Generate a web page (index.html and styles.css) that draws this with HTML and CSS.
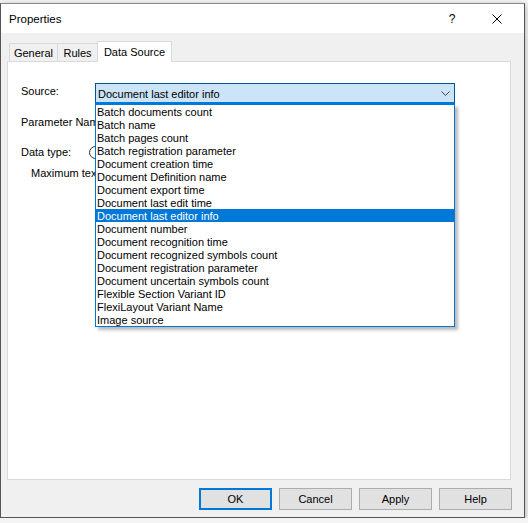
FILE: index.html
```html
<!DOCTYPE html>
<html lang="en">
<head>
  <meta charset="UTF-8">
  <title>Properties</title>
  <link rel="stylesheet" href="styles.css">
</head>
<body>

<div class="window">
  <div class="titlebar">
    <span class="title">Properties</span>
    <span class="cap-btn help">?</span>
    <span class="cap-btn close">
      <svg width="10" height="10" viewBox="0 0 10 10"><path d="M0.5 0.5L9.5 9.5M9.5 0.5L0.5 9.5" stroke="#000" stroke-width="1"/></svg>
    </span>
  </div>

  <div class="client">
    <div class="tabs">
      <div class="tab tab-general">General</div>
      <div class="tab tab-rules">Rules</div>
      <div class="tab tab-source active">Data Source</div>
    </div>

    <div class="panel">
      <div class="row row-source">
        <label class="lbl">Source:</label>
        <div class="combo">
          <div class="combo-box">
            <span>Document last editor info</span>
            <svg class="chev" width="9" height="5" viewBox="0 0 9 5"><path d="M0.5 0.5L4.5 4.5L8.5 0.5" fill="none" stroke="#444" stroke-width="1"/></svg>
          </div>
          <ul class="dropdown">
            <li>Batch documents count</li>
            <li>Batch name</li>
            <li>Batch pages count</li>
            <li>Batch registration parameter</li>
            <li>Document creation time</li>
            <li>Document Definition name</li>
            <li>Document export time</li>
            <li>Document last edit time</li>
            <li class="selected">Document last editor info</li>
            <li>Document number</li>
            <li>Document recognition time</li>
            <li>Document recognized symbols count</li>
            <li>Document registration parameter</li>
            <li>Document uncertain symbols count</li>
            <li>Flexible Section Variant ID</li>
            <li>FlexiLayout Variant Name</li>
            <li>Image source</li>
          </ul>
        </div>
      </div>

      <div class="row row-param">
        <label class="lbl">Parameter Name:</label>
      </div>

      <div class="row row-type">
        <label class="lbl lbl-type">Data type:</label>
        <span class="radio"></span>
      </div>

      <div class="row row-max">
        <label class="lbl lbl-max">Maximum text length:</label>
      </div>
    </div>

    <div class="buttons">
      <button class="btn default">OK</button>
      <button class="btn">Cancel</button>
      <button class="btn">Apply</button>
      <button class="btn">Help</button>
    </div>
  </div>
</div>

</body>
</html>
```

FILE: styles.css
```css
* {
  box-sizing: border-box;
}
body {
  margin: 0;
  padding-top: 3px;
  background: #f4f4f4;
  font-family: "Liberation Sans", Arial, sans-serif;
  font-size: 11px;
  color: #000;
}
.window {
  width: 525px;
  height: 515px;
  border: 1px solid #555;
  border-top-color: #8a8a8a;
  background: #f0f0f0;
  box-shadow: 0 2px 6px rgba(0, 0, 0, 0.35);
  display: flex;
  flex-direction: column;
}
.titlebar {
  height: 29px;
  background: #fff;
  display: flex;
  align-items: center;
  padding: 0 4px 0 8px;
}
.title {
  font-size: 11.5px;
}
.cap-btn {
  width: 46px;
  height: 29px;
  display: flex;
  align-items: center;
  justify-content: center;
}
.help {
  margin-left: auto;
  font-size: 12px;
  padding-left: 2px;
}
.client {
  flex: 1;
  padding: 0 13px 0 6px;
  display: flex;
  flex-direction: column;
}
.tabs {
  height: 28px;
  display: flex;
  align-items: flex-end;
  padding-left: 2px;
}
.tab {
  height: 18px;
  padding-top: 1px;
  border: 1px solid #d9d9d9;
  border-bottom: none;
  background: #f0f0f0;
  display: flex;
  align-items: center;
  justify-content: center;
  white-space: nowrap;
}
.tab + .tab {
  margin-left: -1px;
}
.tab-general {
  width: 49px;
}
.tab-rules {
  width: 41px;
}
.tab-source {
  width: 75px;
}
.tab.active {
  height: 21px;
  padding-top: 0;
  margin-bottom: -1px;
  background: #fff;
  position: relative;
  z-index: 1;
}
.panel {
  height: 419px;
  background: #fff;
  border: 1px solid #d9d9d9;
  padding-left: 13px;
  display: flex;
  flex-direction: column;
}
.row {
  display: flex;
  align-items: center;
  height: 20px;
}
.lbl {
  width: 74px;
  flex-shrink: 0;
  white-space: nowrap;
  overflow: hidden;
}
.row-source {
  margin-top: 21px;
  height: 21px;
}
.row-source .lbl {
  align-self: flex-start;
  margin-top: 2px;
}
.row-param {
  margin-top: 8px;
}
.row-type {
  margin-top: 10px;
}
.lbl-type {
  width: 68px;
}
.radio {
  width: 13px;
  height: 13px;
  border: 1px solid #333;
  border-radius: 50%;
  background: #fff;
}
.row-max {
  margin-top: 1px;
  padding-left: 10px;
}
.lbl-max {
  width: 64px;
}
.combo {
  position: relative;
  width: 360px;
  height: 21px;
  z-index: 2;
}
.combo-box {
  height: 21px;
  background: #cce4f7;
  border: 1px solid #005499;
  border-bottom: 2px solid #0078d7;
  padding: 1px 4px 0 2px;
  display: flex;
  align-items: center;
  justify-content: space-between;
}
.dropdown {
  position: absolute;
  top: 21px;
  left: 0;
  width: 360px;
  margin: 0;
  padding: 0;
  list-style: none;
  background: #fff;
  border: 1px solid #0078d7;
  box-shadow: 3px 3px 3px rgba(0, 0, 0, 0.28);
}
.dropdown li {
  height: 13px;
  line-height: 13px;
  padding-left: 1px;
  padding-top: 1px;
  white-space: nowrap;
}
.dropdown li.selected {
  background: #0078d7;
  color: #fff;
}
.buttons {
  margin-top: 8px;
  display: flex;
  justify-content: flex-end;
  gap: 7px;
  margin-right: -1px;
}
.btn {
  width: 73px;
  height: 22px;
  background: #e1e1e1;
  border: 1px solid #adadad;
  font-family: "Liberation Sans", Arial, sans-serif;
  font-size: 11px;
  color: #000;
  padding: 0;
}
.btn.default {
  border: 2px solid #0078d7;
}
```
